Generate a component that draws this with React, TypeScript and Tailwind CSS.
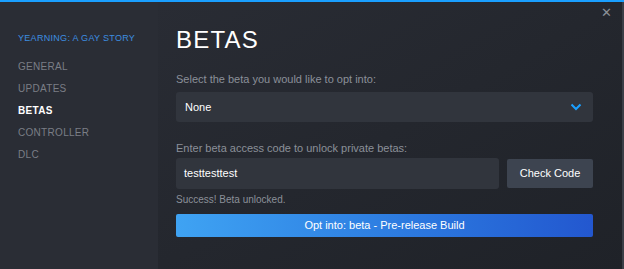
import React from "react";

export default function App() {
  const items = ["GENERAL", "UPDATES", "BETAS", "CONTROLLER", "DLC"];
  return (
    <div
      className="w-[624px] h-[269px] flex flex-col bg-[#23262e] overflow-hidden"
      style={{ fontFamily: '"Liberation Sans", Arial, sans-serif' }}
    >
      <div className="h-[2px] bg-[#1a9fff] shrink-0" />
      <div className="flex flex-1 min-h-0">
        <div className="w-[158px] shrink-0 bg-[#2a2d35] pl-[18px] pt-[29px]">
          <div className="text-[9px] text-[#3d8ee0] tracking-[0.3px] h-[14px] leading-[14px]">
            YEARNING: A GAY STORY
          </div>
          <div className="mt-[15px] flex flex-col gap-[8px]">
            {items.map((it) => (
              <div
                key={it}
                className={
                  "text-[10px] h-[14px] leading-[14px] tracking-[0.3px] " +
                  (it === "BETAS" ? "text-white font-bold" : "text-[#7a7e86]")
                }
              >
                {it}
              </div>
            ))}
          </div>
        </div>
        <div className="relative flex-1 flex flex-col pl-[18px] pr-[29px] pt-[25px] bg-gradient-to-br from-[#292c34] to-[#1f2228] border-r-[2px] border-[#3a3e46]">
          <div className="absolute right-[10px] top-[4px] text-[#8a8f96] text-[13px] leading-none">
            ✕
          </div>
          <div className="text-[24px] leading-[26px] text-white tracking-[1.2px] font-light">
            BETAS
          </div>
          <div className="mt-[19px] text-[11px] leading-[14px] text-[#8b9099]">
            Select the beta you would like to opt into:
          </div>
          <div className="mt-[6px] h-[30px] bg-[#31353d] rounded-[3px] flex items-center justify-between pl-[9px] pr-[11px]">
            <span className="text-[11px] text-white">None</span>
            <svg width="12" height="8" viewBox="0 0 12 8">
              <path d="M1.5 1.5 L6 6 L10.5 1.5" stroke="#1a9fff" strokeWidth="2" fill="none" />
            </svg>
          </div>
          <div className="mt-[19px] text-[11px] leading-[14px] text-[#8b9099]">
            Enter beta access code to unlock private betas:
          </div>
          <div className="mt-[3px] flex gap-[8px]">
            <div className="flex-1 h-[31px] bg-[#31353d] rounded-[3px] flex items-center pl-[8px] text-[11px] text-white">
              testtesttest
            </div>
            <div className="w-[86px] h-[29px] mt-[1px] bg-[#3d4450] rounded-[2px] flex items-center justify-center text-[11px] text-white">
              Check Code
            </div>
          </div>
          <div className="mt-[5px] text-[10px] leading-[12px] text-[#8b9099]">
            Success! Beta unlocked.
          </div>
          <div className="mt-[8px] h-[23px] rounded-[2px] bg-gradient-to-r from-[#3fa3f3] to-[#2357cf] flex items-center justify-center text-[11px] text-white">
            Opt into: beta - Pre-release Build
          </div>
        </div>
      </div>
    </div>
  );
}
